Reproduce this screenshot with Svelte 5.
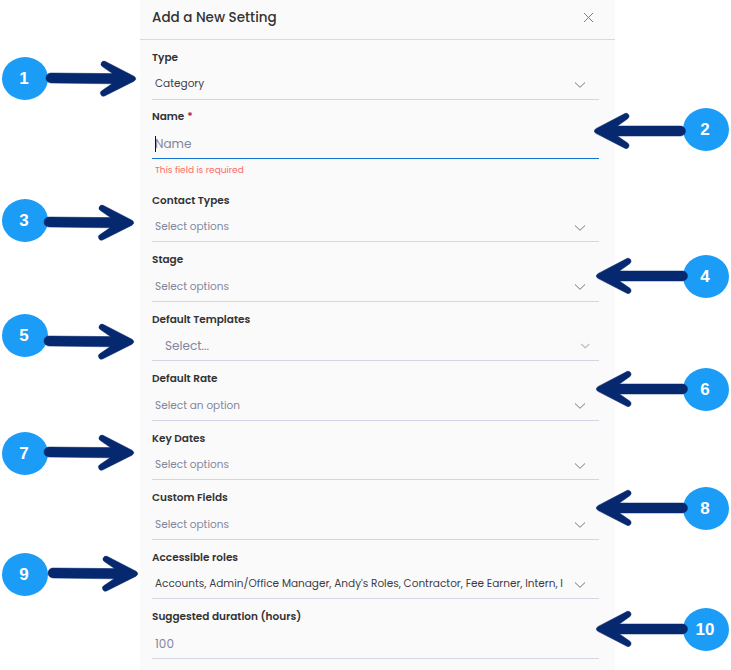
<script>
  const fields = [
    { label: "Type", value: "Category" },
    {
      label: "Name",
      placeholder: "Name",
      kind: "input",
      required: true,
      error: "This field is required",
    },
    { label: "Contact Types", placeholder: "Select options" },
    { label: "Stage", placeholder: "Select options" },
    { label: "Default Templates", placeholder: "Select...", kind: "search" },
    { label: "Default Rate", placeholder: "Select an option" },
    { label: "Key Dates", placeholder: "Select options" },
    { label: "Custom Fields", placeholder: "Select options" },
    {
      label: "Accessible roles",
      value: "Accounts, Admin/Office Manager, Andy's Roles, Contractor, Fee Earner, Intern, I",
    },
    { label: "Suggested duration (hours)", placeholder: "100", kind: "input" },
  ];

  // badge = top of the badge, x / y = top left corner of the arrow
  const callouts = [
    { n: 1, side: "left", badge: 57, x: 46, y: 61 },
    { n: 2, side: "right", badge: 108, x: 593.5, y: 113 },
    { n: 3, side: "left", badge: 199, x: 44, y: 205 },
    { n: 4, side: "right", badge: 255, x: 595.5, y: 258 },
    { n: 5, side: "left", badge: 314, x: 44, y: 324 },
    { n: 6, side: "right", badge: 368, x: 595.5, y: 371 },
    { n: 7, side: "left", badge: 432, x: 44, y: 435 },
    { n: 8, side: "right", badge: 487, x: 595.5, y: 490 },
    { n: 9, side: "left", badge: 553, x: 48, y: 556 },
    { n: 10, side: "right", badge: 608, x: 595.5, y: 611 },
  ];
</script>

<main>
  <section class="panel">
    <header>
      <h1>Add a New Setting</h1>
      <button class="close" aria-label="Close">
        <svg width="11" height="11" viewBox="0 0 11 11">
          <path d="M1 1L10 10M10 1L1 10" />
        </svg>
      </button>
    </header>

    <div class="form">
      {#each fields as field}
        <div class="field">
          <div class="label">
            <span>{field.label}</span>
            {#if field.required}<span class="star">*</span>{/if}
          </div>
          <div class="control {field.kind || 'select'}" class:invalid={field.error}>
            {#if field.error}<span class="caret"></span>{/if}
            <span class="text" class:filled={field.value}>{field.value || field.placeholder}</span>
            {#if field.kind !== "input"}
              <svg class="chevron" width="12" height="8" viewBox="0 0 12 8">
                {#if field.kind === "search"}
                  <path d="M2.3 2L6.3 5.8L10.3 2" />
                {:else}
                  <path d="M1 1.5L6 6.3L11 1.5" />
                {/if}
              </svg>
            {/if}
          </div>
        </div>
        {#if field.error}
          <div class="error"><span>{field.error}</span></div>
        {/if}
      {/each}
    </div>
  </section>

  {#each callouts as c}
    <div class="badge {c.side}" style="top: {c.badge}px"><span>{c.n}</span></div>
    {#if c.side === "left"}
      <svg class="arrow" style="left: {c.x}px; top: {c.y}px" width="92" height="36" viewBox="0 0 92 36">
        <path d="M5 12L66.5 12.6L56.3 5.6A3 3 0 0 1 59 .3L88 15.2Q91.5 17.7 88 20.2L59 34.8A3 3 0 0 1 56 29.6L66 22.8L5 22A5 5 0 0 1 5 12Z" />
      </svg>
    {:else}
      <svg class="arrow" style="left: {c.x}px; top: {c.y}px" width="92" height="36" viewBox="0 0 92 36">
        <path d="M86.5 13L23.5 13L34 5.5A3 3 0 0 0 31.3 .3L2.3 15.4Q-1.7 18 2.3 20.6L31.3 35.5A3 3 0 0 0 34 30.3L23.5 23L86.5 23A5 5 0 0 0 86.5 13Z" />
      </svg>
    {/if}
  {/each}
</main>

<style>
  :global(body) {
    margin: 0;
    background: #ffffff;
    font-family: Poppins, Inter, "Open Sans", sans-serif;
  }

  main {
    position: relative;
    width: 731px;
    height: 670px;
    overflow: hidden;
  }

  .panel {
    width: 475px;
    height: 670px;
    margin-left: 140px;
    background: #fafafa;
  }

  header {
    display: flex;
    align-items: center;
    justify-content: space-between;
    box-sizing: border-box;
    height: 40px;
    padding: 0 21px 4px 12px;
    border-bottom: 1px solid #d6d8e3;
  }

  h1 {
    margin: 0;
    font-size: 13.5px;
    font-weight: 500;
    line-height: 20px;
    color: #333333;
  }

  .close {
    display: flex;
    padding: 0;
    border: none;
    background: none;
  }

  .close path {
    fill: none;
    stroke: #6d8096;
    stroke-width: 1;
  }

  .form {
    padding: 0 16px 0 12px;
  }

  .field {
    display: flex;
    flex-direction: column;
    height: 60px;
  }

  /* rows sit on a 59.5px rhythm */
  .field:nth-child(2),
  .field:nth-child(4),
  .field:nth-child(6),
  .field:nth-child(8),
  .field:nth-child(10) {
    height: 59px;
  }

  .label {
    display: flex;
    gap: 3px;
    padding-top: 9px;
    font-size: 10.5px;
    font-weight: 600;
    line-height: 17px;
    color: #333333;
  }

  .field:nth-child(2) .label {
    padding-top: 8px;
  }

  .star {
    color: #b3262e;
  }

  .control {
    position: relative;
    display: flex;
    flex: 1;
    align-items: center;
    justify-content: space-between;
    padding: 3px 13px 0 3px;
    border-bottom: 1px solid #d5d5e6;
    font-size: 10.5px;
    color: #83869c;
  }

  .select .chevron {
    margin-top: 2px;
  }

  .field:nth-child(5) .select,
  .field:nth-child(7) .select,
  .field:nth-child(9) .select {
    padding-top: 5px;
  }

  .field:nth-child(5) .chevron,
  .field:nth-child(7) .chevron,
  .field:nth-child(9) .chevron {
    margin-top: 0;
  }

  .text {
    white-space: nowrap;
  }

  .filled {
    color: #3c3c46;
  }

  .input {
    padding-top: 4px;
    font-size: 12px;
  }

  .search {
    padding: 4px 8px 0 13px;
    font-size: 12px;
  }

  .invalid {
    border-bottom-color: #1272cf;
  }

  .caret {
    position: absolute;
    left: 3px;
    width: 1px;
    height: 16px;
    background: #111111;
  }

  .chevron path {
    fill: none;
    stroke: #777777;
    stroke-width: 1;
  }

  .search .chevron path {
    stroke: #c4c4c4;
    stroke-width: 1.5;
  }

  .error {
    height: 24px;
    padding-left: 3px;
    font-size: 9px;
    line-height: 22px;
    color: #fb6a66;
  }

  .badge {
    position: absolute;
    display: flex;
    align-items: center;
    justify-content: center;
    box-sizing: border-box;
    width: 46px;
    height: 43px;
    padding-right: 2px;
    border-radius: 50%;
    background: #1b9cf6;
    color: #ffffff;
    font-family: "Liberation Sans", Arial, sans-serif;
    font-size: 17px;
    font-weight: bold;
  }

  .badge.left {
    left: 2px;
  }

  .badge.right {
    left: 683px;
  }

  .arrow {
    position: absolute;
    overflow: visible;
    fill: #06286f;
    stroke: #06286f;
    stroke-width: 0.5;
  }
</style>
